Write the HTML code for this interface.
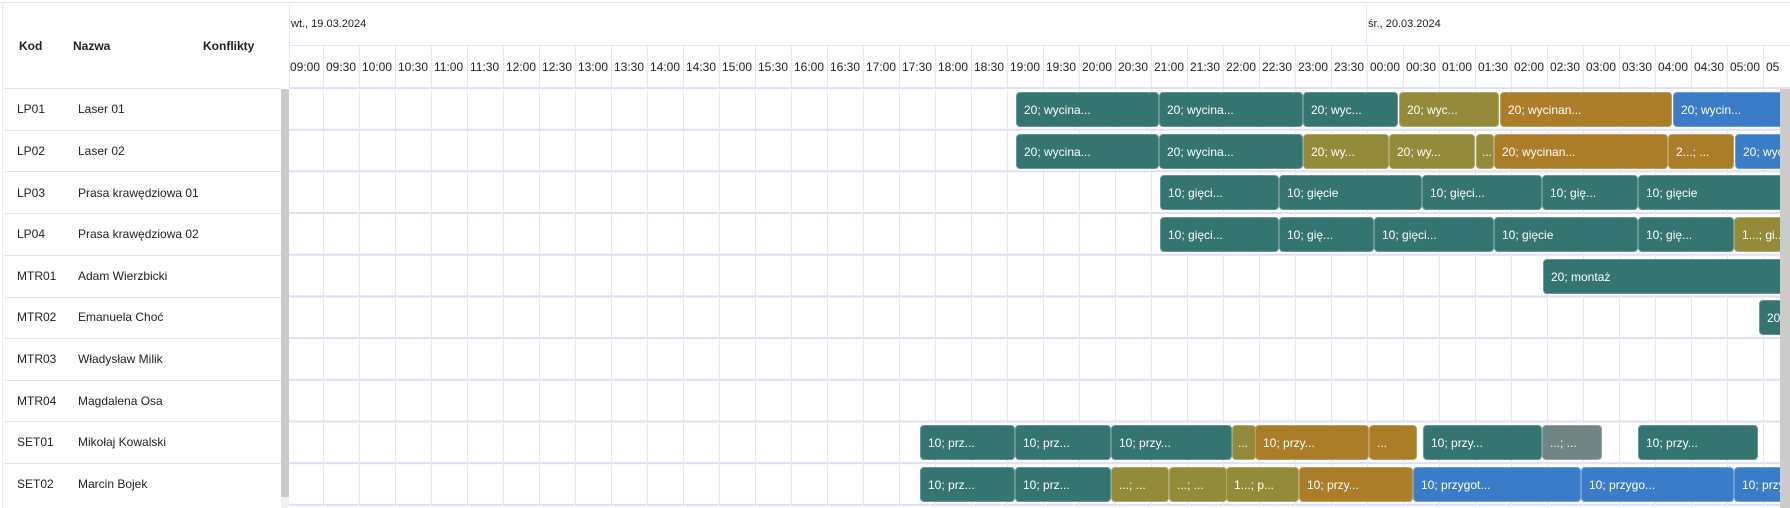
<!DOCTYPE html>
<html><head><meta charset="utf-8"><style>
*{margin:0;padding:0;box-sizing:border-box}
body{width:1790px;height:508px;overflow:hidden;background:#fff;font-family:"Liberation Sans",Arial,sans-serif;color:#222;position:relative}
.abs{position:absolute}
.hl{position:absolute;height:1px;background:#e4e2f7}
.vl{position:absolute;width:1px;background:#e6e4f8}
.lt{position:absolute;font-size:12px;line-height:14px}
.th{font-weight:bold;font-size:12px}
.tl{position:absolute;top:60px;font-size:12px;color:#222;line-height:14px}
#bd{position:absolute;left:289px;top:88px;width:1491px;height:420px;overflow:hidden;
background-image:linear-gradient(to right,#e8e6f8 1px,transparent 1px),linear-gradient(to bottom,#e0def5 2px,transparent 2px);
background-size:36px 41.7px,100% 41.7px;background-position:-2px 0,0 -1px}
.b{position:absolute;height:35px;border-radius:4px;color:#fff;font-size:12px;line-height:35px;padding-left:7px;white-space:nowrap;overflow:hidden;border:1px solid rgba(255,255,255,.25)}
.t{background:#347571}.o{background:#948b3a}.r{background:#ab7d29}.u{background:#3a7cc8}.g{background:#6f8684}
</style></head><body>
<div class="hl" style="left:0;top:2px;width:1790px"></div>
<div class="vl" style="left:2px;top:2px;height:506px;background:#ebebf3"></div>
<div class="lt th" style="left:19px;top:39px">Kod</div>
<div class="lt th" style="left:73px;top:39px">Nazwa</div>
<div class="lt th" style="left:203px;top:39px">Konflikty</div>
<div class="hl" style="left:4px;top:88px;width:277px"></div>
<div class="hl" style="left:4px;top:130px;width:277px"></div>
<div class="hl" style="left:4px;top:171px;width:277px"></div>
<div class="hl" style="left:4px;top:213px;width:277px"></div>
<div class="hl" style="left:4px;top:255px;width:277px"></div>
<div class="hl" style="left:4px;top:297px;width:277px"></div>
<div class="hl" style="left:4px;top:338px;width:277px"></div>
<div class="hl" style="left:4px;top:380px;width:277px"></div>
<div class="hl" style="left:4px;top:421px;width:277px"></div>
<div class="hl" style="left:4px;top:463px;width:277px"></div>
<div class="abs" style="left:281px;top:89px;width:8px;height:408px;background:#cbcbcb"></div>
<div class="abs" style="left:281px;top:497px;width:8px;height:11px;background:#f1f1f1"></div>
<div class="lt" style="left:17px;top:102px">LP01</div><div class="lt" style="left:78px;top:102px">Laser 01</div>
<div class="lt" style="left:17px;top:144px">LP02</div><div class="lt" style="left:78px;top:144px">Laser 02</div>
<div class="lt" style="left:17px;top:186px">LP03</div><div class="lt" style="left:78px;top:186px">Prasa krawędziowa 01</div>
<div class="lt" style="left:17px;top:227px">LP04</div><div class="lt" style="left:78px;top:227px">Prasa krawędziowa 02</div>
<div class="lt" style="left:17px;top:269px">MTR01</div><div class="lt" style="left:78px;top:269px">Adam Wierzbicki</div>
<div class="lt" style="left:17px;top:310px">MTR02</div><div class="lt" style="left:78px;top:310px">Emanuela Choć</div>
<div class="lt" style="left:17px;top:352px">MTR03</div><div class="lt" style="left:78px;top:352px">Władysław Milik</div>
<div class="lt" style="left:17px;top:394px">MTR04</div><div class="lt" style="left:78px;top:394px">Magdalena Osa</div>
<div class="lt" style="left:17px;top:435px">SET01</div><div class="lt" style="left:78px;top:435px">Mikołaj Kowalski</div>
<div class="lt" style="left:17px;top:477px">SET02</div><div class="lt" style="left:78px;top:477px">Marcin Bojek</div>

<div class="vl" style="left:289px;top:4px;height:84px"></div>
<div class="hl" style="left:289px;top:45px;width:1501px"></div>
<div class="hl" style="left:289px;top:87px;width:1501px;height:2px"></div>
<div class="vl" style="left:1366px;top:4px;height:41px"></div>
<div class="lt" style="left:291px;top:17px;font-size:11px">wt., 19.03.2024</div>
<div class="lt" style="left:1368px;top:17px;font-size:11px">śr., 20.03.2024</div>
<div id="hdr" class="abs" style="left:289px;top:45px;width:1491px;height:43px;overflow:hidden;background-image:linear-gradient(to right,#e6e4f8 1px,transparent 1px);background-size:36px 43px;background-position:-2px 0">
<div class="tl" style="left:1px;top:15px;position:absolute">09:00</div>
<div class="tl" style="left:37px;top:15px">09:30</div>
<div class="tl" style="left:73px;top:15px">10:00</div>
<div class="tl" style="left:109px;top:15px">10:30</div>
<div class="tl" style="left:145px;top:15px">11:00</div>
<div class="tl" style="left:181px;top:15px">11:30</div>
<div class="tl" style="left:217px;top:15px">12:00</div>
<div class="tl" style="left:253px;top:15px">12:30</div>
<div class="tl" style="left:289px;top:15px">13:00</div>
<div class="tl" style="left:325px;top:15px">13:30</div>
<div class="tl" style="left:361px;top:15px">14:00</div>
<div class="tl" style="left:397px;top:15px">14:30</div>
<div class="tl" style="left:433px;top:15px">15:00</div>
<div class="tl" style="left:469px;top:15px">15:30</div>
<div class="tl" style="left:505px;top:15px">16:00</div>
<div class="tl" style="left:541px;top:15px">16:30</div>
<div class="tl" style="left:577px;top:15px">17:00</div>
<div class="tl" style="left:613px;top:15px">17:30</div>
<div class="tl" style="left:649px;top:15px">18:00</div>
<div class="tl" style="left:685px;top:15px">18:30</div>
<div class="tl" style="left:721px;top:15px">19:00</div>
<div class="tl" style="left:757px;top:15px">19:30</div>
<div class="tl" style="left:793px;top:15px">20:00</div>
<div class="tl" style="left:829px;top:15px">20:30</div>
<div class="tl" style="left:865px;top:15px">21:00</div>
<div class="tl" style="left:901px;top:15px">21:30</div>
<div class="tl" style="left:937px;top:15px">22:00</div>
<div class="tl" style="left:973px;top:15px">22:30</div>
<div class="tl" style="left:1009px;top:15px">23:00</div>
<div class="tl" style="left:1045px;top:15px">23:30</div>
<div class="tl" style="left:1081px;top:15px">00:00</div>
<div class="tl" style="left:1117px;top:15px">00:30</div>
<div class="tl" style="left:1153px;top:15px">01:00</div>
<div class="tl" style="left:1189px;top:15px">01:30</div>
<div class="tl" style="left:1225px;top:15px">02:00</div>
<div class="tl" style="left:1261px;top:15px">02:30</div>
<div class="tl" style="left:1297px;top:15px">03:00</div>
<div class="tl" style="left:1333px;top:15px">03:30</div>
<div class="tl" style="left:1369px;top:15px">04:00</div>
<div class="tl" style="left:1405px;top:15px">04:30</div>
<div class="tl" style="left:1441px;top:15px">05:00</div>
<div class="tl" style="left:1477px;top:15px">05:30</div>
</div>

<div id="bd">
<!-- LP01 top 4 -->
<div class="b t" style="left:727px;top:4px;width:143px">20; wycina...</div>
<div class="b t" style="left:870px;top:4px;width:144px">20; wycina...</div>
<div class="b t" style="left:1014px;top:4px;width:95px">20; wyc...</div>
<div class="b o" style="left:1110px;top:4px;width:100px">20; wyc...</div>
<div class="b r" style="left:1211px;top:4px;width:172px">20; wycinan...</div>
<div class="b u" style="left:1384px;top:4px;width:120px">20; wycin...</div>
<!-- LP02 top 46 -->
<div class="b t" style="left:727px;top:45.5px;width:143px">20; wycina...</div>
<div class="b t" style="left:870px;top:45.5px;width:144px">20; wycina...</div>
<div class="b o" style="left:1014px;top:45.5px;width:86px">20; wy...</div>
<div class="b o" style="left:1100px;top:45.5px;width:86px">20; wy...</div>
<div class="b o" style="left:1187px;top:45.5px;width:18px;padding-left:5px">...</div>
<div class="b r" style="left:1205px;top:45.5px;width:174px">20; wycinan...</div>
<div class="b r" style="left:1379px;top:45.5px;width:66px">2...; ...</div>
<div class="b u" style="left:1446px;top:45.5px;width:60px">20; wyci</div>
<!-- LP03 -->
<div class="b t" style="left:871px;top:87px;width:119px">10; gięci...</div>
<div class="b t" style="left:990px;top:87px;width:143px">10; gięcie</div>
<div class="b t" style="left:1133px;top:87px;width:120px">10; gięci...</div>
<div class="b t" style="left:1253px;top:87px;width:96px">10; gię...</div>
<div class="b t" style="left:1349px;top:87px;width:160px">10; gięcie</div>
<!-- LP04 -->
<div class="b t" style="left:871px;top:129px;width:119px">10; gięci...</div>
<div class="b t" style="left:990px;top:129px;width:95px">10; gię...</div>
<div class="b t" style="left:1085px;top:129px;width:120px">10; gięci...</div>
<div class="b t" style="left:1205px;top:129px;width:144px">10; gięcie</div>
<div class="b t" style="left:1349px;top:129px;width:96px">10; gię...</div>
<div class="b o" style="left:1445px;top:129px;width:60px">1...; gi...</div>
<!-- MTR01 -->
<div class="b t" style="left:1254px;top:170.5px;width:260px">20; montaż</div>
<!-- MTR02 -->
<div class="b t" style="left:1470px;top:212px;width:40px">20;</div>
<!-- SET01 -->
<div class="b t" style="left:631px;top:337px;width:95px">10; prz...</div>
<div class="b t" style="left:726px;top:337px;width:96px">10; prz...</div>
<div class="b t" style="left:822px;top:337px;width:121px">10; przy...</div>
<div class="b o" style="left:943px;top:337px;width:24px;padding-left:5px">...</div>
<div class="b r" style="left:966px;top:337px;width:114px">10; przy...</div>
<div class="b r" style="left:1080px;top:337px;width:48px">...</div>
<div class="b t" style="left:1134px;top:337px;width:119px">10; przy...</div>
<div class="b g" style="left:1253px;top:337px;width:60px">...; ...</div>
<div class="b t" style="left:1349px;top:337px;width:120px">10; przy...</div>
<!-- SET02 -->
<div class="b t" style="left:631px;top:378.5px;width:95px">10; prz...</div>
<div class="b t" style="left:726px;top:378.5px;width:96px">10; prz...</div>
<div class="b o" style="left:822px;top:378.5px;width:58px">...; ...</div>
<div class="b o" style="left:880px;top:378.5px;width:58px">...; ...</div>
<div class="b o" style="left:937px;top:378.5px;width:73px">1...; p...</div>
<div class="b r" style="left:1010px;top:378.5px;width:114px">10; przy...</div>
<div class="b u" style="left:1124px;top:378.5px;width:168px">10; przygot...</div>
<div class="b u" style="left:1292px;top:378.5px;width:153px">10; przygo...</div>
<div class="b u" style="left:1445px;top:378.5px;width:60px">10; przyg</div>
</div>
<div class="abs" style="left:1780px;top:89px;width:10px;height:419px;background:#cbcbcb"></div>
</body></html>
